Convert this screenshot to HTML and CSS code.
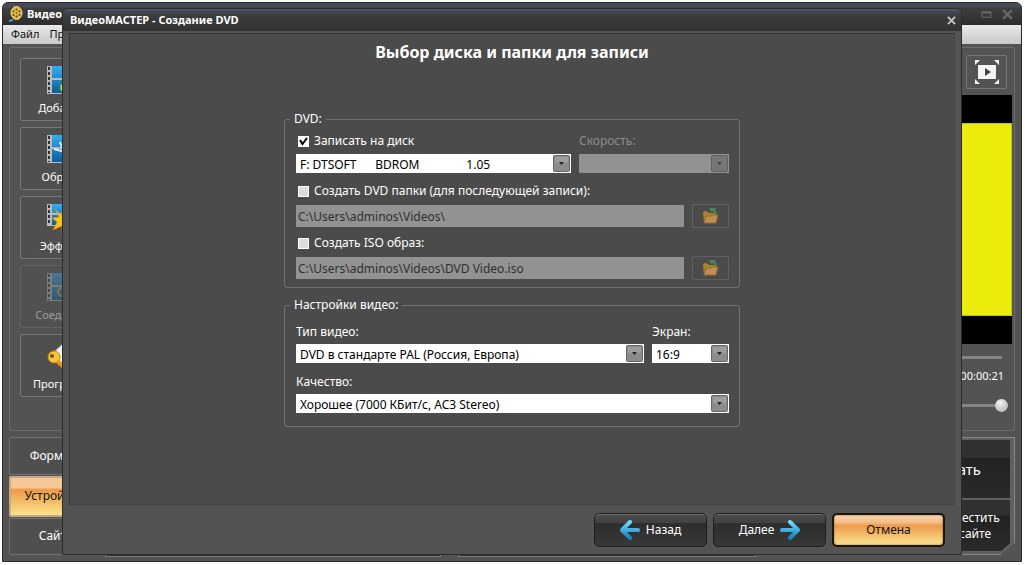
FILE: index.html
```html
<!DOCTYPE html>
<html lang="ru">
<head>
<meta charset="utf-8">
<title>ВидеоМАСТЕР - Создание DVD</title>
<link rel="stylesheet" href="styles.css">
</head>
<body>
<svg class="defs" aria-hidden="true">
  <defs>
    <linearGradient id="frame-blue" x1="0" y1="0" x2="0" y2="1"><stop offset="0" stop-color="#35aef0"/><stop offset="1" stop-color="#0b5c9c"/></linearGradient>
    <linearGradient id="arrow-blue" x1="0" y1="0" x2="0" y2="1"><stop offset="0" stop-color="#6fd6fb"/><stop offset="1" stop-color="#1583c0"/></linearGradient>
    <symbol id="film" viewBox="0 0 34 34">
      <path fill="#b9bcbe" d="M0 2h34v28H0z"/>
      <path fill="url(#frame-blue)" d="M5 2h24v12H5zM5 16h24v13H5z"/>
      <path stroke="#333" stroke-width="2" stroke-dasharray="3 2" d="M2 3v26M32 3v26"/>
    </symbol>
    <symbol id="folder" viewBox="0 0 18 16">
      <path fill="#a98527" d="M1 4l2-1 3 1 1 1h7v10H2z"/>
      <path fill="#b99058" stroke="#a2672a" d="M4 8h5l1-1h6l-2 8H2z"/>
      <path fill="#3f8a5a" d="M7 0h7l-1 2 2 3-2 1-2-3-2 1z"/>
    </symbol>
  </defs>
</svg>
<main class="window">
  <header class="titlebar">
    <svg class="logo" viewBox="0 0 16 16"><path d="M1 15l4-1" stroke="#4b9be0" stroke-width="2"/><ellipse cx="8.500" cy="7" rx="5.500" ry="6.500" fill="#e0ba4c" stroke="#f3d97b"/><g fill="#5b4310"><circle cx="8.500" cy="3.500" r="1"/><circle cx="5.500" cy="5.500" r="1"/><circle cx="11.500" cy="5.500" r="1"/><circle cx="5.500" cy="9" r="1"/><circle cx="11.500" cy="9" r="1"/><circle cx="8.500" cy="10.500" r="1"/><circle cx="8.500" cy="7" r=".8"/></g></svg>
    <span>Видео</span>
    <span class="window-controls">
      <button type="button" aria-label="Развернуть"><svg viewBox="0 0 10 10"><path fill="none" stroke="currentColor" d="M1 2.500h8v5H1zM1 3.500h8"/></svg></button>
      <button type="button" aria-label="Закрыть"><svg viewBox="0 0 10 10"><path fill="none" stroke="currentColor" stroke-width="2" d="M1 1l8 8M9 1L1 9"/></svg></button>
    </span>
  </header>
  <nav class="menu"><a href="#">Файл</a><a href="#">Правка</a></nav>
  <div class="workspace">
    <section class="stage">
      <div class="tools">
        <button type="button" class="tool"><svg viewBox="0 0 34 34"><use href="#film"/><path fill="#9cec72" stroke="#238c1b" d="M13 20h7v-6h6v6h7v7h-7v6h-6v-6h-7z"/></svg>Добавить</button>
        <button type="button" class="tool"><svg viewBox="0 0 34 34"><use href="#film"/><path stroke="#e8e8e8" stroke-width="2" fill="none" d="M7 16l22 6M13 9l4 11"/></svg>Обрезка</button>
        <button type="button" class="tool"><svg viewBox="0 0 34 34"><path fill="#b9bcbe" d="M0 2h34v22H0z"/><path fill="url(#frame-blue)" d="M5 2h24v9H5zM5 13h24v10H5z"/><path stroke="#333" stroke-width="2" stroke-dasharray="3 2" d="M2 3v20"/><path fill="#fbc316" stroke="#dd7e0c" stroke-width=".5" d="M8 7l6 6 2-5 3 5 6-4-2 7 9 1-8 4 5 8-9-5-5 9v-9l-9 4 4-8-5-4 7-1z"/></svg>Эффекты</button>
        <button type="button" class="tool" disabled><svg viewBox="0 0 34 34"><use href="#film"/><circle cx="15" cy="21" r="4" fill="none" stroke="#d0a030" stroke-width="2"/></svg>Соединить</button>
        <button type="button" class="tool"><svg viewBox="0 0 34 34"><path fill="#f1f1f1" stroke="#bbb" d="M5 14L19 1l13 10-12 17z"/><path stroke="#e39a16" stroke-width="4" d="M8 19l11 10"/><circle cx="7" cy="17" r="6" fill="#f7c63a" stroke="#c98412"/><circle cx="5" cy="16" r="2" fill="#7b570e"/></svg>Программа</button>
      </div>
      <div class="player">
        <button type="button" class="fullscreen" aria-label="Во весь экран"><svg viewBox="0 0 24 24"><g fill="#f4f4f4"><path d="M0 0h5L0 5zM24 0h-5l5 5zM0 24h5l-5-5zM24 24h-5l5-5z"/><path d="M3 5h18v14H3z"/></g><path fill="#444" d="M10 8l6 4-6 4z"/></svg></button>
        <div class="screen"><div class="picture"></div></div>
        <div class="track"></div>
        <div class="time">00:00:21</div>
        <div class="volume"><i></i></div>
      </div>
    </section>
    <section class="bottom">
      <div class="tabs">
        <button type="button">Форматы</button>
        <button type="button" class="active">Устройства</button>
        <button type="button">Сайты</button>
      </div>
      <div class="well wide"></div>
      <div class="well"></div>
      <div class="convert">
        <button type="button" class="primary">Конвертировать</button>
        <button type="button" aria-label="Записать"></button>
        <button type="button">Разместить<br>на сайте</button>
      </div>
    </section>
  </div>
</main>

<form class="dialog" role="dialog" aria-labelledby="dialog-title">
  <header class="dialog-title">
    <span id="dialog-title">ВидеоМАСТЕР - Создание DVD</span>
    <button type="button" aria-label="Закрыть"><svg viewBox="0 0 10 10"><path fill="none" stroke="currentColor" stroke-width="2" d="M1 1l8 8M9 1L1 9"/></svg></button>
  </header>
  <div class="panel">
    <h1>Выбор диска и папки для записи</h1>
    <fieldset class="disc">
      <legend>DVD:</legend>
      <div class="row drive">
        <label class="check"><input type="checkbox" checked>Записать на диск</label>
        <label class="off" for="speed">Скорость:</label>
        <select aria-label="Диск"><option>F: DTSOFT&nbsp;&nbsp;&nbsp;&nbsp;&nbsp; BDROM&nbsp;&nbsp;&nbsp;&nbsp;&nbsp;&nbsp;&nbsp;&nbsp;&nbsp;&nbsp;&nbsp;&nbsp;&nbsp;&nbsp; 1.05</option></select>
        <select id="speed" disabled><option></option></select>
      </div>
      <label class="check second"><input type="checkbox">Создать DVD папки (для последующей записи):</label>
      <div class="row path">
        <input type="text" aria-label="Папка DVD" value="C:\Users\adminos\Videos\" disabled>
        <button type="button" aria-label="Выбрать папку" disabled><svg><use href="#folder"/></svg></button>
      </div>
      <label class="check third"><input type="checkbox">Создать ISO образ:</label>
      <div class="row path">
        <input type="text" aria-label="Файл ISO" value="C:\Users\adminos\Videos\DVD Video.iso" disabled>
        <button type="button" aria-label="Выбрать файл" disabled><svg><use href="#folder"/></svg></button>
      </div>
    </fieldset>
    <fieldset class="video">
      <legend>Настройки видео:</legend>
      <div class="row format">
        <label for="type">Тип видео:</label>
        <label for="aspect">Экран:</label>
        <select id="type"><option>DVD в стандарте PAL (Россия, Европа)</option></select>
        <select id="aspect"><option>16:9</option></select>
      </div>
      <div class="row quality">
        <label for="quality">Качество:</label>
        <select id="quality"><option>Хорошее (7000 КБит/с, AC3 Stereo)</option></select>
      </div>
    </fieldset>
  </div>
  <footer class="actions">
    <button type="button"><svg viewBox="0 0 20 20"><path fill="none" stroke="url(#arrow-blue)" stroke-width="4" stroke-linecap="round" stroke-linejoin="round" d="M10 2L2 10l8 8M3 10h15l.1.1"/></svg>Назад</button>
    <button type="button">Далее<svg viewBox="0 0 20 20"><path fill="none" stroke="url(#arrow-blue)" stroke-width="4" stroke-linecap="round" stroke-linejoin="round" d="M10 2l8 8-8 8M17 10H2l-.1.1"/></svg></button>
    <button type="button" class="cancel">Отмена</button>
  </footer>
</form>
</body>
</html>
```

FILE: styles.css
```css
* { box-sizing: border-box; }
body {
  margin: 0;
  height: 100vh;
  padding: 2px 3px 3px 2px;
  display: flex;
  position: relative;
  background: #fff;
  color: #fff;
  font: 12px/16px "Noto Sans", "DejaVu Sans Condensed", sans-serif;
}
button, input, select { font: inherit; color: inherit; margin: 0; }
button { padding: 0; border: 0; background: none; }
.defs { position: absolute; width: 0; height: 0; }

.window {
  flex: 1;
  display: flex;
  flex-direction: column;
  overflow: hidden;
  border: 1px solid #2b2b2b;
  border-radius: 6px 6px 0 0;
  background: #535353;
}
.titlebar {
  height: 22px;
  display: flex;
  align-items: center;
  gap: 3px;
  padding: 0 8px 0 5px;
  font-weight: bold;
  font-size: 11px;
  background: linear-gradient(#454b57 0 4px, #3e3e3e 5px, #2d2d2d);
}
.logo { width: 16px; height: 16px; }
.window-controls { margin-left: auto; display: flex; gap: 10px; color: #666; }
.window-controls button, .window-controls svg { width: 11px; height: 11px; display: block; }
.menu {
  height: 19px;
  display: flex;
  gap: 10px;
  padding: 1px 8px;
  background: linear-gradient(#e9e9e9, #c9c9c9);
  font-size: 11px;
}
.menu a { color: #111; text-decoration: none; }
.workspace { flex: 1; display: flex; flex-direction: column; gap: 6px; padding: 3px 6px 6px; }
.stage { flex: 1; display: flex; justify-content: space-between; border: 1px solid #6c6c6c; border-radius: 2px; }
.tools { display: flex; flex-direction: column; gap: 6px; padding: 10px; }
.tool {
  width: 88px;
  height: 63px;
  display: flex;
  flex-direction: column;
  align-items: center;
  gap: 2px;
  padding-top: 5px;
  border: 1px solid #777;
  border-radius: 2px;
  background: #4f4f4f;
  font-size: 11px;
}
.tool svg { width: 34px; height: 34px; }
.tool:disabled { opacity: .4; }
.player { width: 402px; display: flex; flex-direction: column; padding: 7px 2px; }
.fullscreen {
  align-self: flex-end;
  width: 41px;
  height: 34px;
  margin-right: 5px;
  display: grid;
  place-items: center;
  border: 1px solid #777;
  border-radius: 2px;
}
.fullscreen svg { width: 24px; height: 24px; }
.screen { height: 249px; margin-top: 6px; padding: 28px 0; background: #000; }
.picture { height: 193px; background: #ebeb0c; border: 1px solid #c5c516; }
.track { height: 3px; margin: 12px 10px 0 0; background: #858585; }
.time { margin: 9px 8px 0 0; text-align: right; font-size: 11px; }
.volume { display: flex; align-items: center; justify-content: flex-end; margin: 15px 4px 0 0; }
.volume::before { content: ""; width: 80px; height: 3px; background: #858585; }
.volume i { width: 13px; height: 13px; border-radius: 50%; background: radial-gradient(circle at 40% 30%, #f2f2f2, #aaa); }

.bottom { height: 118px; display: flex; gap: 17px; }
.tabs { width: 96px; margin-right: -17px; display: flex; flex-direction: column; gap: 1px; }
.tabs button { flex: 1; border: 1px solid #737373; border-radius: 2px; background: #4f4f4f; }
.tabs .active {
  flex: 0 0 41px;
  color: #111;
  border: 2px solid #c9a982;
  background: linear-gradient(#f6c79a 0 25%, #eb9a48 32%, #fbe48c);
}
.well { flex: 8; margin-bottom: -2px; border: 1px solid #777; box-shadow: inset 0 -1px #333; }
.well.wide { flex: 9; }
.convert {
  width: 242px;
  display: grid;
  grid-template: 58px 1fr / 1fr 87px;
  gap: 2px;
  padding: 2px 4px 3px 3px;
  border: 1px solid #888;
  clip-path: polygon(0 0, 100% 0, 100% 90%, 94% 100%, 0 100%);
  background: #606060;
}
.convert button { background: linear-gradient(#303030 0 30%, #222 31%, #2a2a2a); }
.convert button:last-child { clip-path: polygon(0 0, 100% 0, 100% 85%, 90% 100%, 0 100%); }
.convert .primary { grid-column: span 2; padding-left: 56px; font-size: 15px; }

.dialog {
  position: absolute;
  inset: 8px 63px 10px 62px;
  display: flex;
  flex-direction: column;
  border: 1px solid #2c2c2c;
  border-radius: 6px 6px 0 0;
  background: #535353;
  overflow: hidden;
}
.dialog-title {
  height: 22px;
  display: flex;
  align-items: center;
  justify-content: space-between;
  padding: 0 5px 0 7px;
  font-weight: bold;
  font-size: 11px;
  background: linear-gradient(#505866 0 1px, #424754 2px 4px, #3d3d3d 5px, #323232);
}
.dialog-title button, .dialog-title svg { width: 9px; height: 9px; display: block; color: #c8c8c8; }
.panel {
  flex: 1;
  display: flex;
  flex-direction: column;
  align-items: center;
  margin: 2px 6px 0;
  padding-top: 8px;
  border: 1px solid;
  border-color: #333 #454545 #454545 #333;
  background: #4b4b4b;
}
h1 { margin: 0 0 49px; font-size: 16px; line-height: 20px; }
fieldset {
  width: 100%;
  max-width: 456px;
  margin: 0;
  border: 1px solid #707070;
  border-radius: 3px;
}
legend { margin-left: -6px; padding: 0 4px; }
.disc { padding: 6px 10px 7px 11px; }
.video { margin-top: 9px; padding: 11px 10px 13px 11px; }
.row { display: grid; }
.drive { grid-template-columns: 1fr 150px; gap: 5px 8px; }
.format { grid-template-columns: 1fr 77px; gap: 4px 8px; }
.quality { gap: 4px; margin-top: 11px; }
.path { grid-template-columns: 1fr 37px; gap: 8px; align-items: center; }
.off { color: #8b8b8b; }
.check { display: flex; align-items: center; gap: 5px; padding-left: 2px; }
.second { margin: 10px 0 5px; }
.third { margin: 7px 0 5px; }
.check input {
  appearance: none;
  width: 11px;
  height: 11px;
  border: 1px solid #fff;
  background: #dcdcdc;
}
.check input:checked {
  background: #fff url("data:image/svg+xml,%3Csvg xmlns='http://www.w3.org/2000/svg' viewBox='0 0 9 9'%3E%3Cpath fill='none' stroke='%23000' stroke-width='2' d='M1 3l2.500 4L8 1'/%3E%3C/svg%3E");
}
select {
  appearance: none;
  width: 100%;
  height: 19px;
  padding: 2px 20px 0 4px;
  border: 0;
  border-radius: 0;
  color: #000;
  background: #fff url("data:image/svg+xml,%3Csvg xmlns='http://www.w3.org/2000/svg' width='17' height='17'%3E%3Crect x='.5' y='.5' width='16' height='16' rx='1' fill='%238b8b8b' stroke='%23666'/%3E%3Cpath fill='%239d9d9d' d='M2 2h13v6H2z'/%3E%3Cpath fill='%23222' d='M6 7h5L8.500 10z'/%3E%3C/svg%3E") no-repeat right 1px center;
}
select:disabled {
  opacity: 1;
  background: #929292 url("data:image/svg+xml,%3Csvg xmlns='http://www.w3.org/2000/svg' width='17' height='17'%3E%3Crect x='.5' y='.5' width='16' height='16' rx='1' fill='%23777' stroke='%23606060'/%3E%3Cpath fill='%23484848' d='M6 7h5L8.500 10z'/%3E%3C/svg%3E") no-repeat right 1px center;
}
.path input { width: 100%; height: 22px; padding: 0 2px; border: 0; background: #929292; color: #303030; }
.path button { height: 24px; display: grid; place-items: center; border: 1px solid #5f5f5f; border-radius: 1px; }
.path svg { width: 18px; height: 16px; }

.actions { display: flex; justify-content: flex-end; gap: 6px; padding: 8px 16px 7px; }
.actions button {
  width: 113px;
  height: 34px;
  display: flex;
  align-items: center;
  justify-content: center;
  gap: 6px;
  border: 1px solid #1e1e1e;
  border-radius: 5px;
  box-shadow: inset 0 1px #707070;
  background: linear-gradient(#4c4c4c, #414141 28%, #2d2d2d 30%, #383838);
}
.actions svg { width: 20px; height: 20px; }
.actions .cancel {
  color: #111;
  border: 2px solid #191510;
  box-shadow: inset 0 0 2px #8a541b;
  background: linear-gradient(#fbd9b6, #f2bd86 25%, #ec9c4b 35%, #fbe290);
}
```
